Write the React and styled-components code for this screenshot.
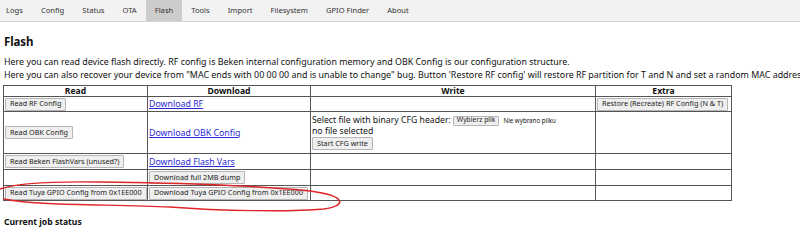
import React from "react";
import styled, { createGlobalStyle } from "styled-components";

const tabs = [
  "Logs",
  "Config",
  "Status",
  "OTA",
  "Flash",
  "Tools",
  "Import",
  "Filesystem",
  "GPIO Finder",
  "About",
];

const GlobalStyle = createGlobalStyle`
  html, body {
    margin: 0;
    padding: 0;
    background: #fff;
    overflow: hidden;
  }
  body {
    font-family: "Noto Sans", "Open Sans", sans-serif;
    color: #111;
  }
`;

const Page = styled.div`
  position: relative;
  width: 800px;
  height: 241px;
  overflow: hidden;
`;

const NavBar = styled.nav`
  display: flex;
  height: 22px;
  background: #f2f2f2;
  border-bottom: 1px solid #d4d4d4;
  box-sizing: border-box;
  margin-left: -3px;
`;

const Tab = styled.div`
  padding: 0 9px;
  line-height: 21px;
  font-size: 7.6px;
  color: #333;
  background: ${(p) => (p.$active ? "#cccccc" : "transparent")};
`;

const Content = styled.main`
  padding: 0 4px 0 3px;
`;

const Title = styled.h2`
  margin: 11px 0 0 1px;
  font-size: 11.5px;
  line-height: 17px;
  font-weight: 700;
  letter-spacing: -0.1px;
`;

const Intro = styled.div`
  margin: 5px 0 4px 1px;
  font-size: 8.9px;
  line-height: 13px;
  white-space: nowrap;
`;

const Table = styled.table`
  border-collapse: collapse;
  border: 1px solid #555;
  table-layout: fixed;
  width: 729px;
  font-size: 8.6px;
`;

const Col = styled.col`
  width: ${(p) => p.$w}px;
`;

const Head = styled.th`
  border: 1px solid #555;
  padding: 0 1px;
  height: 10px;
  line-height: 10px;
  font-size: 8.6px;
  font-weight: 700;
  text-align: center;
`;

const Row = styled.tr`
  height: ${(p) => p.$h}px;
`;

const Cell = styled.td`
  border: 1px solid #555;
  padding: 0 1px;
  vertical-align: middle;
  white-space: nowrap;
  overflow: hidden;
`;

const Button = styled.button`
  font-family: "Noto Sans", "Open Sans", sans-serif;
  font-size: ${(p) => (p.$small ? 6.8 : 7.25)}px;
  height: ${(p) => (p.$small ? 10 : 13)}px;
  line-height: 1;
  padding: 0 ${(p) => (p.$small ? 3 : 4)}px;
  margin: 0;
  color: #222;
  background: #efefef;
  border: 1px solid #b5b5b5;
  border-radius: 1px;
  vertical-align: middle;
  white-space: nowrap;
`;

const Link = styled.a`
  color: #2a2ad6;
  text-decoration: underline;
  font-size: 8.8px;
`;

const WriteBox = styled.div`
  display: flex;
  flex-direction: column;
  align-items: flex-start;
  line-height: 11px;
  font-size: 8.7px;
`;

const FileLine = styled.div`
  display: flex;
  align-items: center;
  gap: 2px;
`;

const FileNote = styled.span`
  font-size: 6.2px;
  margin-left: 2px;
`;

const Status = styled.h3`
  margin: 15px 0 0 1px;
  font-size: 8.6px;
  line-height: 12px;
  font-weight: 700;
`;

const Scribble = styled.svg`
  position: absolute;
  left: 0;
  top: 0;
  pointer-events: none;
`;

const App = () => {
  return (
    <Page>
      <GlobalStyle />
      <NavBar>
        {tabs.map((t) => (
          <Tab key={t} $active={t === "Flash"}>
            {t}
          </Tab>
        ))}
      </NavBar>
      <Content>
        <Title>Flash</Title>
        <Intro>
          <div>
            Here you can read device flash directly. RF config is Beken
            internal configuration memory and OBK Config is our configuration
            structure.
          </div>
          <div>
            Here you can also recover your device from "MAC ends with 00 00 00
            and is unable to change" bug. Button 'Restore RF config' will
            restore RF partition for T and N and set a random MAC address.
          </div>
        </Intro>
        <Table>
          <colgroup>
            <Col $w={144} />
            <Col $w={163} />
            <Col $w={285} />
            <Col $w={136} />
          </colgroup>
          <thead>
            <tr>
              <Head>Read</Head>
              <Head>Download</Head>
              <Head>Write</Head>
              <Head>Extra</Head>
            </tr>
          </thead>
          <tbody>
            <Row $h={15}>
              <Cell>
                <Button>Read RF Config</Button>
              </Cell>
              <Cell>
                <Link href="#">Download RF</Link>
              </Cell>
              <Cell />
              <Cell>
                <Button>Restore (Recreate) RF Config (N &amp; T)</Button>
              </Cell>
            </Row>
            <Row $h={42}>
              <Cell>
                <Button>Read OBK Config</Button>
              </Cell>
              <Cell>
                <Link href="#">Download OBK Config</Link>
              </Cell>
              <Cell>
                <WriteBox>
                  <FileLine>
                    <span>Select file with binary CFG header:</span>
                    <Button $small>Wybierz plik</Button>
                    <FileNote>Nie wybrano pliku</FileNote>
                  </FileLine>
                  <span>no file selected</span>
                  <Button>Start CFG write</Button>
                </WriteBox>
              </Cell>
              <Cell />
            </Row>
            <Row $h={16}>
              <Cell>
                <Button>Read Beken FlashVars (unused?)</Button>
              </Cell>
              <Cell>
                <Link href="#">Download Flash Vars</Link>
              </Cell>
              <Cell />
              <Cell />
            </Row>
            <Row $h={16}>
              <Cell />
              <Cell>
                <Button>Download full 2MB dump</Button>
              </Cell>
              <Cell />
              <Cell />
            </Row>
            <Row $h={15}>
              <Cell>
                <Button>Read Tuya GPIO Config from 0x1EE000</Button>
              </Cell>
              <Cell>
                <Button>Download Tuya GPIO Config from 0x1EE000</Button>
              </Cell>
              <Cell />
              <Cell />
            </Row>
          </tbody>
        </Table>
        <Status>Current job status</Status>
      </Content>
      <Scribble width="800" height="241" viewBox="0 0 800 241">
        <path
          d="M0 189 C 14 184 40 181 100 182 C 180 183 260 186 310 191 C 348 196 346 206 324 209 C 290 212 220 211 170 207 C 110 204 40 206 4 199"
          fill="none"
          stroke="#e0262a"
          strokeWidth="1.4"
          strokeLinecap="round"
        />
      </Scribble>
    </Page>
  );
};

export default App;
